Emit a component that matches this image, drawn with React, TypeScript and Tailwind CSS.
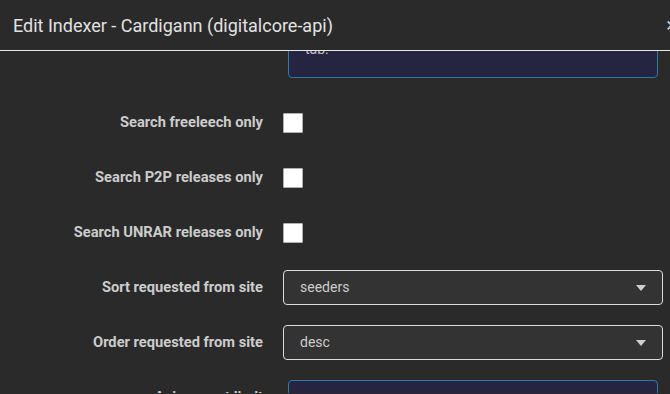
import React from "react";

const Label: React.FC<{ text: string }> = ({ text }) => (
  <div className="w-[263px] shrink-0 text-right text-[14.7px] font-bold text-[#cccccc]">{text}</div>
);

const CheckRow: React.FC<{ label: string }> = ({ label }) => (
  <div className="flex h-[55px] items-center">
    <Label text={label} />
    <div className="ml-5 h-5 w-5 rounded-[1px] border border-[#b0b0b0] bg-white" />
  </div>
);

const SelectRow: React.FC<{ label: string; value: string }> = ({ label, value }) => (
  <div className="flex h-[55px] items-center">
    <Label text={label} />
    <div className="ml-5 flex h-[35px] w-[380px] items-center justify-between rounded-[4px] border border-[#d8dcdc] bg-[#333333] pl-4 pr-[16px]">
      <span className="text-[14px] text-[#cccccc]">{value}</span>
      <svg width="10" height="6" viewBox="0 0 10 6">
        <path d="M0 0 H10 L5 6 Z" fill="#cfcfcf" />
      </svg>
    </div>
  </div>
);

export default function App() {
  return (
    <div className="h-[394px] w-[670px] overflow-hidden bg-[#2a2a2a] font-['Roboto',sans-serif]">
      <header className="relative z-10 flex h-[51px] items-center justify-between border-b border-[#e6e6e6] bg-[#2a2a2a] pl-[13px]">
        <h1 className="text-[18px] text-[#e1e1e1]">Edit Indexer - Cardigann (digitalcore-api)</h1>
        <span className="-mr-[7px] text-[20px] leading-none text-[#cccccc]">×</span>
      </header>
      <div className="h-[342px] overflow-hidden">
        <div className="flex">
          <div className="w-[288px] shrink-0" />
          <div className="-mt-[34px] flex h-[61px] w-[370px] flex-col justify-end rounded-[4px] border border-[#2d7ba8] bg-[#252542] px-4 pb-[18px]">
            <span className="text-[14px] leading-5 text-[#bfbfbf]">tab.</span>
          </div>
        </div>
        <div className="mt-[17px]">
          <CheckRow label="Search freeleech only" />
          <CheckRow label="Search P2P releases only" />
          <CheckRow label="Search UNRAR releases only" />
          <SelectRow label="Sort requested from site" value="seeders" />
          <SelectRow label="Order requested from site" value="desc" />
          <div className="flex h-[55px] items-center">
            <Label text="Api request limit" />
            <div className="ml-[25px] h-[35px] w-[370px] rounded-[4px] border border-[#2d7ba8] bg-[#252542]" />
          </div>
        </div>
      </div>
    </div>
  );
}
